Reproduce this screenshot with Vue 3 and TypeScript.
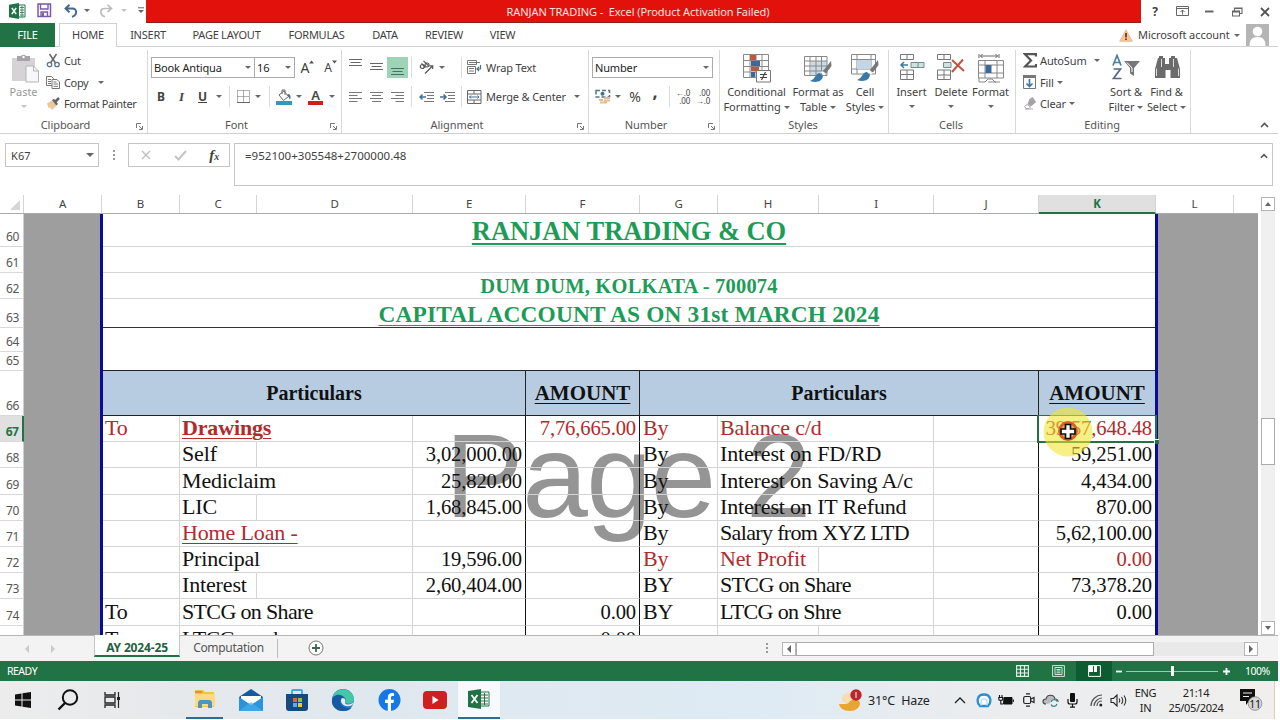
<script setup lang="ts">
interface Cell {
  text?: string
  cls?: string
  span?: number
}

interface Row {
  n: number
  h: number
  kind?: string
  cells: Cell[]
}

const menu = ['INSERT', 'PAGE LAYOUT', 'FORMULAS', 'DATA', 'REVIEW', 'VIEW']
const columns = ['A', 'B', 'C', 'D', 'E', 'F', 'G', 'H', 'I', 'J', 'K', 'L', '']

// to, account, inner amount, amount, by, account, amount
function entry(n: number, h: number, v: string[], cls: string[] = []): Row {
  const [to, left, inner, amount, by, right, total] = v
  const wideLeft = !['Self', 'LIC', 'Interest'].includes(left)
  const wideRight = !['Net Profit', ''].includes(right)
  // names in capitals are set closer
  const tight = (s: string) => (/TCG|LTD/.test(s) ? 'tight' : '')
  return {
    n,
    h,
    cells: [
      { text: to, cls: cls[0] },
      { text: left, cls: `${cls[1] ?? ''} ${wideLeft ? 'wide' : ''} ${tight(left)}` },
      {},
      { text: inner, cls: 'num ink' },
      { text: amount, cls: `num ink ${cls[3] ?? ''}` },
      { text: by, cls: `by ${cls[4] ?? ''}` },
      { text: right, cls: `${cls[5] ?? ''} ${wideRight ? 'wide' : ''} ${tight(right)}` },
      {},
      { cls: 'ink' },
      { text: total, cls: `num last ${cls[6] ?? ''}` },
    ],
  }
}

const rows: Row[] = [
  { n: 60, h: 33, kind: 'merged', cells: [{ text: 'RANJAN TRADING & CO', cls: 't-name', span: 10 }] },
  { n: 61, h: 26, kind: 'merged', cells: [{ span: 10 }] },
  { n: 62, h: 26, kind: 'merged', cells: [{ text: 'DUM DUM, KOLKATA - 700074', cls: 't-addr', span: 10 }] },
  { n: 63, h: 29, kind: 'merged', cells: [{ text: 'CAPITAL ACCOUNT AS ON 31st MARCH 2024', cls: 't-acc', span: 10 }] },
  { n: 64, h: 24, kind: 'merged', cells: [{ cls: 'open', span: 10 }] },
  { n: 65, h: 19, kind: 'merged', cells: [{ cls: 'rule', span: 10 }] },
  {
    n: 66,
    h: 45,
    kind: 'head',
    cells: [
      { text: 'Particulars', span: 4 },
      { text: 'AMOUNT', cls: 'amt' },
      { text: 'Particulars', span: 4 },
      { text: 'AMOUNT', cls: 'amt last' },
    ],
  },
  entry(67, 26, ['To', 'Drawings', '', '7,76,665.00', 'By', 'Balance c/d', '39,57,648.48'], ['red', 'red bold line', '', 'red', 'red', 'red', 'red']),
  entry(68, 26, ['', 'Self', '3,02,000.00', '', 'By', 'Interest on FD/RD', '59,251.00']),
  entry(69, 27, ['', 'Mediclaim', '25,820.00', '', 'By', 'Interest on Saving A/c', '4,434.00']),
  entry(70, 26, ['', 'LIC', '1,68,845.00', '', 'By', 'Interest on IT Refund', '870.00']),
  entry(71, 26, ['', 'Home Loan -', '', '', 'By', 'Salary from XYZ LTD', '5,62,100.00'], ['', 'red line']),
  entry(72, 26, ['', 'Principal', '19,596.00', '', 'By', 'Net Profit', '0.00'], ['', '', '', '', 'red', 'red', 'red']),
  entry(73, 26, ['', 'Interest', '2,60,404.00', '', 'BY', 'STCG on Share', '73,378.20']),
  entry(74, 27, ['To', 'STCG on Share', '', '0.00', 'BY', 'LTCG on Shre', '0.00']),
  entry(75, 27, ['To', 'LTCG on share', '', '0.00', '', '', '']),
]
</script>

<template>
  <div class="screen">
    <header class="title-bar">
      <div class="quick">
        <svg width="17" height="16" viewBox="0 0 17 16">
          <path d="M9 2h7v12H9z" fill="#fff" stroke="#217346" />
          <path d="M11 4.5h4M11 7h4M11 9.500h4M11 12h4M13 3v11" stroke="#217346" stroke-width=".8" />
          <path d="M0 1.800 10 0v16L0 14.200z" fill="#217346" />
          <path d="m2.800 4.800 4.400 6.400M7.200 4.800l-4.400 6.400" stroke="#fff" stroke-width="1.500" />
        </svg>
        <svg width="15" height="15" viewBox="0 0 15 15">
          <path d="M1 1h12.500v12.500H1z" fill="#fff" stroke="#7a5ba5" stroke-width="1.500" />
          <path d="M3.500 1v5h7.500V1M4 13V9h6.500v4" fill="none" stroke="#7a5ba5" stroke-width="1.400" />
          <path d="M5 10h2v3H5z" fill="#7a5ba5" />
        </svg>
        <svg width="15" height="14" viewBox="0 0 15 14">
          <path d="M5.500.8 1.500 4.500l4 3.700M2 4.500h6.500c5 0 5 6.500-.5 8.300" fill="none" stroke="#44658d" stroke-width="1.900" />
        </svg>
        <i class="dd" />
        <svg width="15" height="14" viewBox="0 0 15 14">
          <path d="m9.500.8 4 3.700-4 3.700M13 4.500H6.500c-5 0-5 6.500.5 8.300" fill="none" stroke="#bcbcbc" stroke-width="1.700" />
        </svg>
        <i class="dd pale" />
        <svg width="7" height="7" viewBox="0 0 7 7"><path d="M0 .8h6" stroke="#666" /><path d="M0 3h6L3 6z" fill="#666" /></svg>
      </div>
      <div class="caption">RANJAN TRADING -&nbsp; Excel (Product Activation Failed)</div>
      <div class="win-buttons">
        <b>?</b>
        <svg width="13" height="11" viewBox="0 0 13 11">
          <path d="M.5.500h12v9H.5zM.5 2.500h12M6.500 8.500V4M4.500 6l2-2 2 2" fill="none" stroke="#666" />
        </svg>
        <svg width="9" height="3" viewBox="0 0 9 3"><path d="M0 1.500h8.500" stroke="#666" stroke-width="2" /></svg>
        <svg width="11" height="10" viewBox="0 0 11 10">
          <path d="M.5 4h7v5h-7zM.5 5h7M2.500 3.500V1h7.500v5.500H8M2.500 1.500H10" fill="none" stroke="#666" stroke-width="1.100" />
        </svg>
        <svg width="10" height="10" viewBox="0 0 10 10"><path d="m1 1 8 8M9 1 1 9" stroke="#555" stroke-width="1.800" /></svg>
      </div>
    </header>

    <nav class="menu">
      <span class="file">FILE</span>
      <span class="home">HOME</span>
      <span v-for="m in menu" :key="m">{{ m }}</span>
      <div class="account">
        <svg width="14" height="13" viewBox="0 0 14 13">
          <path d="M7 .8 13.300 12.300H.7z" fill="#f6c698" stroke="#e9b07c" stroke-width=".8" />
          <path d="M7 4v4.500M7 9.500v1.600" stroke="#6b3a2a" stroke-width="1.800" />
        </svg>
        <span class="who">Microsoft account</span>
        <i class="dd" />
        <svg width="23" height="22" viewBox="0 0 23 22">
          <path d="M0 0h23v22H0z" fill="#b5b5b5" />
          <circle cx="11.500" cy="7.500" r="4.800" fill="#fff" />
          <path d="M3.500 22c0-6 2.500-9 8-9s8 3 8 9z" fill="#fff" />
        </svg>
      </div>
    </nav>

    <section class="ribbon">
      <div class="group g-clip">
        <div class="tools">
          <div class="big off">
            <svg width="28" height="29" viewBox="0 0 28 29">
              <path d="M0 4h23v23H0z" fill="#d5d3d6" />
              <path d="M5 2h4a3 3 0 0 1 5 0h4v5H5z" fill="#a4a4a4" /><circle cx="11.500" cy="3" r="1.200" fill="#fff" />
              <path d="M14 12h7.500l5 5v11H14z" fill="#f7f6f8" stroke="#b5b5b5" />
              <path d="M21.500 12v5h5" fill="none" stroke="#b5b5b5" />
            </svg>
            <span>Paste</span><i class="dd pale" />
          </div>
          <div class="stack">
            <div class="small">
              <svg width="15" height="15" viewBox="0 0 15 15">
                <path d="m3.500 1 6 9M10.500 1l-6 9" stroke="#666" stroke-width="1.500" />
                <circle cx="3.500" cy="11.500" r="2.200" fill="none" stroke="#56758f" stroke-width="1.300" />
                <circle cx="11" cy="11.500" r="2.200" fill="none" stroke="#56758f" stroke-width="1.300" />
              </svg>
              <span>Cut</span>
            </div>
            <div class="small">
              <svg width="15" height="13" viewBox="0 0 15 13">
                <path d="M.5.500h5l2 2v7h-7zM2 3.500h3M2 5.500h3M2 7.500h3" fill="#fff" stroke="#777" />
                <path d="M6 3.500h5l2.500 2.500v6.500H6zM7.500 6h3M7.500 8h4.500M7.500 10.300H12" fill="#fff" stroke="#777" />
              </svg>
              <span>Copy</span><i class="dd far" />
            </div>
            <div class="small">
              <svg width="15" height="13" viewBox="0 0 15 13">
                <path d="M1 6.500 6.500 3l4 5.500L6 13 4.500 10.500 2.500 11z" fill="#edc795" />
                <path d="m6 3 2-1.200 4 5.200L10.300 8.600z" fill="#5f6467" /><path d="M9.500 4.500 13 1" stroke="#5f6467" stroke-width="2.500" />
              </svg>
              <span>Format Painter</span>
            </div>
          </div>
        </div>
        <footer>Clipboard<svg class="launch" viewBox="0 0 7 7"><path d="M.5 5V.500H5M3 3l3 3M6.500 3v3.500H3" /></svg></footer>
      </div>

      <div class="group g-font">
        <div class="line1">
          <div class="combo">Book Antiqua<i class="dd" /></div>
          <div class="combo size">16<i class="dd" /></div>
          <span class="grow">A<svg width="5" height="4" viewBox="0 0 5 4"><path d="M0 3.500 2.500.500 5 3.500z" fill="#555" /></svg></span>
          <span class="grow less">A<svg width="5" height="4" viewBox="0 0 5 4"><path d="M0 .500h5l-2.500 3z" fill="#555" /></svg></span>
        </div>
        <div class="line2">
          <b>B</b><b class="ital">I</b><b class="under">U</b><i class="dd" /><i class="sep" />
          <svg width="13" height="13" viewBox="0 0 13 13">
            <path d="M.5.500h12v12M.5.500v12M6.500.500v12M.5 6.500h12" fill="none" stroke="#666" stroke-dasharray="1 1" />
            <path d="M0 12.500h13" stroke="#666" />
          </svg>
          <i class="dd" /><i class="sep" />
          <svg width="16" height="16" viewBox="0 0 16 16">
            <path d="m3 6 5-4 4.500 5.500-5 4z" fill="#fff" stroke="#666" /><path d="M6 5V1h3v5" fill="none" stroke="#666" />
            <path d="M12 5c3 .5 3 4 2 5.500-1.500-1-.5-3-3-4z" fill="#44718f" /><path d="M0 12h16v4H0z" fill="#2e9bb5" />
          </svg>
          <i class="dd" />
          <span class="fcolor">A</span>
          <i class="dd" />
        </div>
        <footer>Font<svg class="launch" viewBox="0 0 7 7"><path d="M.5 5V.500H5M3 3l3 3M6.500 3v3.500H3" /></svg></footer>
      </div>

      <div class="group g-align">
        <div class="line1">
          <svg width="13" height="21" viewBox="0 0 13 21"><path d="M0 2.500h13M1.500 5.500h10M0 8.500h13" stroke="#666" /></svg>
          <svg width="13" height="21" viewBox="0 0 13 21"><path d="M0 6.500h13M1.500 9.500h10M0 12.500h13" stroke="#666" /></svg>
          <svg class="active" width="21" height="21" viewBox="0 0 21 21"><path d="M4 11.500h13M5.500 14.500h10M4 17.500h13" stroke="#4d6f60" /></svg>
          <i class="sep" />
          <svg width="15" height="15" viewBox="0 0 15 15">
            <g fill="none" stroke="#555" stroke-width="1.200">
              <circle cx="3.300" cy="6.500" r="2" /><path d="m2.500 3.500 4 4" /><circle cx="8" cy="5" r="2" /><path d="m4.500.800 4.800 4.800" />
              <path d="m6 13.500 7.500-7.500M10.500 5.800h3.200V9" />
            </g>
          </svg>
          <i class="dd" /><i class="sep end" />
          <svg width="15" height="15" viewBox="0 0 15 15">
            <path d="M.5.500h9v4h-9zM.5 6.500h8v7h-8z" fill="none" stroke="#777" />
            <path d="M2 2.500h11M2 8.500h5M2 11h5" stroke="#777" /><path d="M13.500 5v4H10M12 7l-2 2 2 2" fill="none" stroke="#44718f" stroke-width="1.200" />
          </svg>
          <span class="start">Wrap Text</span>
        </div>
        <div class="line2">
          <svg width="13" height="12" viewBox="0 0 13 12"><path d="M0 1.500h13M0 4.500h8.500M0 7.500h13M0 10.500h8.500" stroke="#777" /></svg>
          <svg width="13" height="12" viewBox="0 0 13 12"><path d="M0 1.500h13M2 4.500h9M0 7.500h13M2 10.500h9" stroke="#777" /></svg>
          <svg width="13" height="12" viewBox="0 0 13 12"><path d="M0 1.500h13M4.500 4.500H13M0 7.500h13M4.500 10.500H13" stroke="#777" /></svg>
          <i class="sep" />
          <svg width="15" height="12" viewBox="0 0 15 12"><path d="M5 1.500h10M8 4.500h7M8 7.500h7M5 10.500h10" stroke="#777" /><path d="M7 6H1M3.500 3.500 1 6l2.500 2.500" fill="none" stroke="#44718f" stroke-width="1.500" /></svg>
          <svg width="15" height="12" viewBox="0 0 15 12"><path d="M5 1.500h10M8 4.500h7M8 7.500h7M5 10.500h10" stroke="#777" /><path d="M0 6h6M3.500 3.500 6 6 3.500 8.500" fill="none" stroke="#44718f" stroke-width="1.500" /></svg>
          <i class="sep end" />
          <svg width="15" height="14" viewBox="0 0 15 14">
            <path d="M.5.500h13.500v13H.5zM.5 4h13.500M.5 10h13.500M7 .500V4M7 10v3.500" fill="none" stroke="#666" />
            <path d="M2.500 7h9.500M4 5.500 2.500 7 4 8.500M10.500 5.500 12 7l-1.500 1.500" fill="none" stroke="#44718f" />
          </svg>
          <span class="start">Merge &amp; Center</span><i class="dd" />
        </div>
        <footer>Alignment<svg class="launch" viewBox="0 0 7 7"><path d="M.5 5V.500H5M3 3l3 3M6.500 3v3.500H3" /></svg></footer>
      </div>

      <div class="group g-num">
        <div class="line1"><div class="combo">Number<i class="dd" /></div></div>
        <div class="line2">
          <svg width="16" height="16" viewBox="0 0 16 16">
            <path d="M1 1.500h13.500v6.500H1z" fill="#fff" stroke="#56758f" stroke-width="1.500" stroke-dasharray="4 2" />
            <circle cx="7.500" cy="4.800" r="2" fill="#44718f" /><path d="M9 9h6M9 11.500h6M4 11h4M5 13.500h7" stroke="#e3be93" stroke-width="1.800" />
          </svg>
          <i class="dd" /><span class="pct">%</span><span class="comma">,</span><i class="sep" />
          <span class="dec">←.0<br>.00</span><span class="dec">.00<br>→.0</span>
        </div>
        <footer>Number<svg class="launch" viewBox="0 0 7 7"><path d="M.5 5V.500H5M3 3l3 3M6.500 3v3.500H3" /></svg></footer>
      </div>

      <div class="group g-styles">
        <div class="tools">
          <div class="big">
            <svg width="28" height="29" viewBox="0 0 28 29">
              <path d="M.5.500h25v23H.5zM7 .500v23M13 .500v23M19 .500v23M.5 6.500h25M.5 12.500h25M.5 18h25" fill="#fff" stroke="#888" />
              <path d="M7 1h6v5H7zM8 13h8v4H8z" fill="#c2553f" /><path d="M8 7h9v5H8zM8 18h4v5H8z" fill="#3b6a98" />
              <path d="M13.500 16.500h14v11.500h-14z" fill="#fff" stroke="#777" /><path d="M17 20.500h7M17 23.500h7M22.500 18l-4 8" stroke="#444" stroke-width="1.200" />
            </svg>
            <span>Conditional</span><span>Formatting<i class="dd" /></span>
          </div>
          <div class="big">
            <svg width="28" height="29" viewBox="0 0 28 29">
              <path d="M7 7h16v14H7z" fill="#c8dbe6" />
              <path d="M.5 2.500h22.500v19H.5zM6 2.500v19M12 2.500v19M17.500 2.500v19M.5 7h22.500M.5 12h22.500M.5 17h22.500" fill="none" stroke="#888" />
              <path d="m27 7-8 10 3 2.500L27.500 12z" fill="#777" /><path d="m18 17 3.500 3-1.500 1.500-3.200-3z" fill="#fff" /><path d="M16 19c-5 0-4 6-10 8 6 2 12 1 13-5z" fill="#3b79a5" />
            </svg>
            <span>Format as</span><span>Table<i class="dd" /></span>
          </div>
          <div class="big">
            <svg width="28" height="29" viewBox="0 0 28 29">
              <path d="M.5.500h24v19.500H.5zM6 .500v19.500M20 .500v19.500M.5 5.500h24M.5 15h24" fill="#fff" stroke="#888" /><path d="M6 6h14v9H6z" fill="#c1d7e8" />
              <path d="m27 6-8 10 3 2.500L27.500 11z" fill="#777" /><path d="m18 16 3.500 3-1.500 1.500-3.200-3z" fill="#fff" /><path d="M16 18c-5 0-4 6-10 8 6 2 12 1 13-5z" fill="#3b79a5" />
            </svg>
            <span>Cell</span><span>Styles<i class="dd" /></span>
          </div>
        </div>
        <footer>Styles</footer>
      </div>

      <div class="group g-cells">
        <div class="tools">
          <div class="big">
            <svg width="28" height="29" viewBox="0 0 28 29">
              <path d="M2.500.500h13v5h-13zM9 .500v5M2.500 16h13v9.500h-13zM9 16v9.500M2.500 20.500h13" fill="#fff" stroke="#777" />
              <path d="M13 8.500h13v5H13zM20 8.500v5" fill="#cfe3dc" stroke="#6f8f8a" /><path d="M10 11H3M6 8l-3 3 3 3" fill="none" stroke="#3b79a5" stroke-width="1.500" />
            </svg>
            <span>Insert</span><i class="dd" />
          </div>
          <div class="big">
            <svg width="28" height="29" viewBox="0 0 28 29">
              <path d="M.5.500h13v5h-13zM7 .500v5M.5 16h13v9.500h-13zM7 16v9.500M.5 21h13" fill="#fff" stroke="#777" />
              <path d="M6.500 8.500H14v5H6.500z" fill="#cfe3dc" stroke="#6f8f8a" /><path d="m15 6 12 11M26 5.500 15 18" stroke="#bf5540" stroke-width="2" />
            </svg>
            <span>Delete</span><i class="dd" />
          </div>
          <div class="big">
            <svg width="28" height="29" viewBox="0 0 28 29">
              <path d="M2 0v4M22 0v4M3 2h18M5.500 0l-2 2 2 2M18.500 0l2 2-2 2" fill="none" stroke="#666" />
              <path d="M1.500 6.500h25V24h-25zM8 6.500V24M20 6.500V24M1.500 11h25M1.500 19h25" fill="#fff" stroke="#888" />
              <path d="M8.500 11h6v8h-6z" fill="#3b6a98" /><path d="M2 24v4h6l3-3h4l3 3h5M11 28h8" fill="none" stroke="#888" />
            </svg>
            <span>Format</span><i class="dd" />
          </div>
        </div>
        <footer>Cells</footer>
      </div>

      <div class="group g-edit">
        <div class="tools">
          <div class="stack">
            <div class="small">
              <svg width="14" height="15" viewBox="0 0 14 15"><path d="M13 3.500V1.200H2l6 6.300-6 6h11V11" fill="none" stroke="#555" stroke-width="2.200" /></svg>
              <span class="wide-lbl">AutoSum</span><i class="dd" />
            </div>
            <div class="small">
              <svg width="14" height="14" viewBox="0 0 14 14"><path d="M.5.500h12v13H.5z" fill="#fff" stroke="#777" /><path d="M0 0h13v3H0z" fill="#777" /><path d="M6.500 4v7.500M3.500 8.500l3 3 3-3" fill="none" stroke="#3b79a5" stroke-width="1.700" /></svg>
              <span>Fill</span><i class="dd" />
            </div>
            <div class="small">
              <svg width="14" height="13" viewBox="0 0 14 13"><path d="m6.500 2 3-2L13 5 8 9.500 4.500 7z" fill="#a8a0a8" /><path d="M4 7.500 7.500 10 6 11.500H3L1.500 9.500z" fill="#fff" stroke="#aaa" /><path d="M2 12h8" stroke="#aaa" /></svg>
              <span>Clear</span><i class="dd" />
            </div>
          </div>
          <div class="big">
            <svg width="28" height="29" viewBox="0 0 28 29">
              <path d="m1 11.500 4-10 4 10M2.300 8.500h5.400" fill="none" stroke="#4a7f9d" stroke-width="1.700" />
              <path d="M1.500 15h7L1.500 24.500h8" fill="none" stroke="#5b6687" stroke-width="1.700" />
              <path d="M12 7h16l-6 7v8l-4-2.500V14z" fill="#777" /><path d="m15 8.500 5 5.500v4" fill="none" stroke="#fff" />
            </svg>
            <span>Sort &amp;</span><span>Filter<i class="dd" /></span>
          </div>
          <div class="big">
            <svg width="28" height="29" viewBox="0 0 28 29">
              <path d="M6 4V2h4v2h2v6h4V4h2V2h4v2h2l3 11v9h-9.500v-8h-5v8H2v-9L5 4z" fill="#6b6b6b" />
              <path d="M3.500 14.500V22M25.500 14.500V22M8.500 5v8M20.500 5v8" stroke="#ddd" />
            </svg>
            <span>Find &amp;</span><span>Select<i class="dd" /></span>
          </div>
        </div>
        <footer>Editing</footer>
      </div>
      <div class="fold"><svg width="9" height="6" viewBox="0 0 9 6"><path d="m1 5 3.500-3.500L8 5" fill="none" stroke="#555" stroke-width="1.600" /></svg></div>
    </section>

    <section class="formula-bar">
      <div class="name-box">K67<i class="dd big-dd" /></div>
      <span class="dots"><i /><i /><i /></span>
      <div class="fx">
        <svg width="10" height="10" viewBox="0 0 10 10"><path d="m1 1 8 8M9 1 1 9" stroke="#c2c2c2" stroke-width="1.500" /></svg>
        <svg width="13" height="11" viewBox="0 0 13 11"><path d="m1 6 3.500 3.500L12 1" fill="none" stroke="#c4c4c4" stroke-width="2" /></svg>
        <em>f<small>x</small></em>
      </div>
      <div class="formula">
        =952100+305548+2700000.48
        <svg width="8" height="6" viewBox="0 0 9 6"><path d="m1 5 3.500-3.500L8 5" fill="none" stroke="#555" stroke-width="1.800" /></svg>
      </div>
    </section>

    <main class="work">
      <div class="sheet">
        <div class="col-heads">
          <span class="corner"><i /></span>
          <span v-for="c in columns" :key="c" :class="{ sel: c === 'K', none: c === '' }">{{ c }}</span>
        </div>
        <div class="grid-area">
          <div class="row-heads">
            <span v-for="r in rows" :key="r.n" :class="{ sel: r.n === 67 }" :style="{ height: r.h + 'px' }">{{ r.n === 75 ? '' : r.n }}</span>
          </div>
          <div class="outside left" />
          <div class="page">
            <div class="watermark">Page 2</div>
            <div v-for="r in rows" :key="r.n" class="row" :class="r.kind" :style="{ height: r.h + 'px' }">
              <div v-for="(c, i) in r.cells" :key="i" class="cell" :class="c.cls" :style="{ gridColumn: `span ${c.span ?? 1}` }">
                <span>{{ c.text }}</span>
              </div>
            </div>
            <div class="selection"><i /></div>
            <svg class="pointer" width="50" height="50" viewBox="0 0 50 50">
              <circle cx="25" cy="25" r="24.500" fill="#f0e52c" fill-opacity=".58" />
              <circle cx="25" cy="24" r="8.500" fill="#e9a03c" stroke="#d5602f" stroke-width="3" fill-opacity=".7" />
              <path d="M22.500 17.500h5v4.500h4.500v5h-4.500v4.500h-5V27H18v-5h4.500z" fill="#fff" stroke="#111" stroke-width="1.700" />
            </svg>
          </div>
          <div class="outside right" />
        </div>
      </div>
      <div class="v-scroll">
        <span class="sbtn"><i class="up" /></span>
        <div class="v-track"><div class="v-thumb" /></div>
        <span class="sbtn"><i class="down" /></span>
      </div>
    </main>

    <section class="tabs-bar">
      <div class="tab-nav"><i class="lt" /><i class="rt" /></div>
      <span class="tab on">AY 2024-25</span>
      <span class="tab">Computation</span>
      <svg class="add" width="16" height="16" viewBox="0 0 16 16"><circle cx="8" cy="8" r="7" fill="#fff" stroke="#777" /><path d="M8 4v8M4 8h8" stroke="#3f6653" stroke-width="1.800" /></svg>
      <span class="dots"><i /><i /><i /></span>
      <div class="h-scroll">
        <span class="sbtn"><i class="lt" /></span>
        <div class="h-track"><div class="h-thumb" /></div>
        <span class="sbtn"><i class="rt" /></span>
      </div>
    </section>

    <section class="status">
      <span class="ready">READY</span>
      <span class="view"><svg width="13" height="12" viewBox="0 0 13 12"><path d="M.6.600h11.800v10.800H.6zM4.500 0v12M8.500 0v12M0 4.200h13M0 8h13" fill="none" stroke="#e8f2ec" stroke-width="1.100" /></svg></span>
      <span class="view"><svg width="13" height="12" viewBox="0 0 13 12"><path d="M.6.600h11.800v10.800H.6zM3 2.500h7v7H3zM4.500 4.500h4M4.500 6h4M4.500 7.800h4" fill="none" stroke="#d5e7dc" /></svg></span>
      <span class="view on"><svg width="13" height="12" viewBox="0 0 13 12"><path d="M.6.600h11.800v10.800H.6z" fill="none" stroke="#fff" /><path d="M1 1h4v6H1zM6 1h3v6H6z" fill="#fff" /></svg></span>
      <svg class="zoom" width="120" height="14" viewBox="0 0 120 14">
        <path d="M4 7.500h6" stroke="#fff" stroke-width="1.800" /><path d="M14 7.500h92" stroke="#a5c7b3" />
        <path d="M59 2h3v10h-3z" fill="#fff" /><path d="M111 7.500h7M114.500 4v7" stroke="#fff" stroke-width="1.800" />
      </svg>
      <span class="pcent">100%</span>
    </section>

    <footer class="taskbar">
      <div class="apps">
        <span><svg width="16" height="16" viewBox="0 0 16 16"><path d="m0 2.500 6.500-1v6H0zM7.500 1.300 16 0v7.500H7.500zM0 8.500h6.500v6l-6.500-1zM7.500 8.500H16V16l-8.500-1.300z" fill="#111" /></svg></span>
        <span><svg width="22" height="22" viewBox="0 0 22 22"><circle cx="13" cy="8.500" r="7.200" fill="none" stroke="#111" stroke-width="2" /><path d="m8 14-6.500 6.500" stroke="#111" stroke-width="2.400" /></svg></span>
        <span><svg width="17" height="16" viewBox="0 0 17 16"><path d="M1 0v3h10V0M1 5h10v6H1zM1 16v-3h10v3" fill="none" stroke="#222" stroke-width="1.300" /><path d="M14.500 0v16" stroke="#222" stroke-width="1.200" /><path d="M13 5h3v3h-3z" fill="#222" /></svg></span>
        <span class="gap" />
        <span class="run"><svg width="22" height="18" viewBox="0 0 22 18"><path d="M1 0h8l2 2h9v15H1z" fill="#f1c04e" /><path d="M1 4h20v12H1z" fill="#fcda81" /><path d="M1 1h7v2H1z" fill="#e08d3c" /><path d="M4 18v-5q0-3 3-3h8q3 0 3 3v5h-4v-4H8v4z" fill="#4c96c4" /></svg></span>
        <span><svg width="24" height="22" viewBox="0 0 24 22"><path d="M0 8 12 0l12 8v4H0z" fill="#135a9e" /><path d="M2 7h20v7H2z" fill="#fff" /><path d="M0 8v14h24V8l-12 8z" fill="#2b93dd" /><path d="m0 22 12-9 12 9z" fill="#45b5f0" opacity=".6" /></svg></span>
        <span><svg width="22" height="22" viewBox="0 0 22 22"><path d="M6 6V2q0-1 1-1h8q1 0 1 1v4" fill="none" stroke="#47a3df" stroke-width="1.800" /><path d="M0 5h22v14q0 3-3 3H3q-3 0-3-3z" fill="#164a7c" /><path d="M7 9h4v4H7z" fill="#e3623b" /><path d="M12 9h4v4h-4z" fill="#8cc152" /><path d="M7 14h4v4H7z" fill="#4bb4ef" /><path d="M12 14h4v4h-4z" fill="#f3c43f" /></svg></span>
        <span>
          <svg width="24" height="22" viewBox="0 0 24 22">
            <circle cx="12" cy="11" r="11" fill="#1b78c8" /><path d="M1.500 8C4-2 20-3 23 9c.7 5-4 7-9 5 2-2 1-6-3-7-4-.8-7 0-9.500 1z" fill="#45c6a5" />
            <path d="M1 11c1-6 10-7 12-2-6 0-5 8 2 10 3 .7 5 0 6-1-2 3-5 4-9 4C5 22 0 17 1 11z" fill="#185aa0" /><path d="M11 9c5 0 3 4 3 5 2 3 7 1 9-1-1 4-5 5-8 4-5-1-6-6-4-8z" fill="#e3eef2" />
          </svg>
        </span>
        <span><svg width="23" height="22" viewBox="0 0 23 22"><circle cx="11.500" cy="11" r="11" fill="#1578e6" /><path d="M9.800 22v-8H7v-3.200h2.800V8.500c0-3 1.700-4.500 4.300-4.500l2 .2v2.900h-1.500c-1.300 0-1.600.7-1.600 1.700v2h3l-.6 3.200H13v8z" fill="#fff" /></svg></span>
        <span><svg width="24" height="18" viewBox="0 0 24 18"><rect width="24" height="18" rx="4" fill="#cd201f" /><path d="m9.500 5 6 4-6 4z" fill="#fff" /></svg></span>
        <span class="run now">
          <svg width="22" height="20" viewBox="0 0 22 20">
            <path d="M11 3h10v14H11z" fill="#fff" stroke="#217346" /><path d="M13 6h7M13 9h7M13 12h7M13 15h7M16.500 4v12" stroke="#217346" />
            <path d="M0 2 13 0v20L0 18z" fill="#217346" /><path d="m3.500 6 6 8M9.500 6l-6 8" stroke="#fff" stroke-width="1.800" />
          </svg>
        </span>
      </div>
      <div class="tray">
        <svg width="23" height="23" viewBox="0 0 23 23">
          <path d="M3 12C2 5 9 1 13 5c3 3 1 10-4 11z" fill="#f8dcb4" /><path d="M0 15h7c3 0 3-3 6-4 4-1 8 0 8 3 0 5-5 8-10 8C4 22 1 19 0 15z" fill="#eaa52f" />
          <circle cx="17" cy="6" r="5.700" fill="#b9272b" /><path d="M17 3v6" stroke="#fff" />
        </svg>
        <span class="weather">31°C&nbsp; Haze</span>
        <svg width="12" height="8" viewBox="0 0 12 8"><path d="m1 7 5-5 5 5" fill="none" stroke="#222" stroke-width="1.300" /></svg>
        <svg width="16" height="15" viewBox="0 0 16 15"><path d="M4 13C0 9 1 1.500 8 1.500s8 7.500 4 11.500z" fill="#fff" stroke="#2b8ed0" stroke-width="2.300" /><path d="M5 13V8q0-2 3-2t3 2v5" fill="none" stroke="#9fd0ec" /></svg>
        <svg width="16" height="11" viewBox="0 0 16 11"><path d="M6 2.500h8V9H5.500z" fill="#111" stroke="#111" /><path d="M15.300 4.500v2.500M1.500 0v2M4 0v2M.8 2.500v1.700q0 1 1 1h1.900q1 0 1-1V2.500zM2.800 5v4H5" fill="none" stroke="#111" stroke-width="1.100" /></svg>
        <svg width="12" height="14" viewBox="0 0 12 14"><rect x=".7" y="3.500" width="7" height="7" rx="1.500" fill="none" stroke="#222" stroke-width="1.200" /><path d="m8 6 3-1.500v5L8 8M3 .8h4M3 13.200h4" fill="none" stroke="#222" stroke-width="1.200" /></svg>
        <svg width="17" height="13" viewBox="0 0 17 13"><path d="M4 10C0 10 0 5 4 5c1-5 8-5 9 0 2 0 3 1.500 3 3" fill="#b9bcbd" stroke="#444" stroke-width="1.200" /><circle cx="12" cy="9" r="3.800" fill="#eee" /><path d="M9 8c1-3 5-3 6-.5M15 10c-1 3-5 3-6 .5" fill="none" stroke="#37828c" stroke-width="1.200" /></svg>
        <svg width="11" height="15" viewBox="0 0 11 15"><rect x="3" width="5" height="9" rx="1" fill="#111" /><path d="M1 6v3q0 2 2 2h5q2 0 2-2V6M5.500 11v3M3 14.200h5" fill="none" stroke="#111" stroke-width="1.200" /></svg>
        <svg width="13" height="13" viewBox="0 0 13 13"><path d="M1 12C1 6 6 1 12 1M4 12c0-4 4-8 8-8M7 12c0-3 2-5 5-5" fill="none" stroke="#555" stroke-width="1.200" /><circle cx="10.800" cy="11" r="1.500" fill="#222" /></svg>
        <svg width="17" height="13" viewBox="0 0 17 13"><path d="M1 4.500h2.500L7 1v11L3.500 8.500H1z" fill="none" stroke="#222" stroke-width="1.100" /><path d="M9 4.500q1.500 2 0 4M11.500 3q2.500 3.500 0 7M14 1.500q3.500 5 0 10" fill="none" stroke="#333" stroke-width="1.100" /></svg>
        <span class="two">ENG<br>IN</span>
        <span class="two">21:14<br>25/05/2024</span>
        <svg class="notes" width="23" height="22" viewBox="0 0 23 22">
          <path d="M0 0h15v12H9l-3 4v-4H0z" fill="#111" /><path d="M3 4h9M3 7.500h6" stroke="#eee" /><circle cx="15" cy="14.500" r="6.800" fill="#d6d6d6" stroke="#777" stroke-width=".7" />
          <text x="15" y="18.500" text-anchor="middle" font-size="10.500" fill="#111">11</text>
        </svg>
      </div>
    </footer>
  </div>
</template>

<style>
body {
  margin: 0;
  background: #fff;
}
</style>

<style scoped>
.screen {
  width: 1280px;
  height: 720px;
  overflow: hidden;
  display: flex;
  flex-direction: column;
  background: #fff;
  color: #3f3f3f;
  font-family: 'Noto Sans', sans-serif;
  font-size: 11px;
  letter-spacing: -0.15px;
  white-space: nowrap;
}

.screen * {
  box-sizing: border-box;
}

svg {
  display: block;
  flex: none;
}

.dd {
  display: inline-block;
  width: 0;
  height: 0;
  flex: none;
  border: 3px solid transparent;
  border-top-color: #666;
  border-bottom: 0;
}

.dd.pale {
  border-top-color: #c4c4c4;
}

.sep {
  width: 1px;
  height: 21px;
  background: #dcdcdc;
}

/* Title bar */
.title-bar {
  display: flex;
  height: 23px;
}

.quick {
  width: 146px;
  display: grid;
  grid-template-columns: 34px 20px 34px 1px 32px 9px 22px;
  align-items: center;
  justify-items: center;
  padding-bottom: 2px;
}

.quick .dd {
  margin-left: -3px;
}

.caption {
  width: 995px;
  padding-right: 11px;
  background: #e2110c;
  color: #ffe3e0;
  border-bottom: 1px solid #8b2420;
  text-align: center;
  line-height: 23px;
  letter-spacing: -0.08px;
}

.win-buttons {
  display: grid;
  grid-template-columns: 28px 27px 27px 28px 27px;
  align-items: center;
  justify-items: center;
  font-size: 12px;
}

/* Menu */
.menu {
  display: grid;
  grid-template-columns: 55px 66px 54px 103px 77px 60px 58px 59px 1fr;
  width: 1278px;
  height: 24px;
  border-bottom: 1px solid #d2d2d2;
  line-height: 24px;
  text-align: center;
  letter-spacing: -0.25px;
}

.file {
  background: #217346;
  color: #fff;
}

.home {
  width: 58px;
  margin-left: 4px;
  border: 1px solid #d2d2d2;
  border-bottom: 0;
  background: #fff;
  height: 24px;
  line-height: 22px;
}

.account {
  display: flex;
  align-items: center;
  justify-content: flex-end;
  padding-right: 9px;
}

.account .who {
  width: 91px;
  margin: 0 5px;
  letter-spacing: -0.05px;
}

.account svg:last-child {
  margin-left: 6px;
}

/* Ribbon */
.ribbon {
  display: flex;
  width: 1278px;
  height: 87px;
  border-bottom: 1px solid #d0d0d0;
}

.group {
  display: flex;
  flex-direction: column;
  height: 83px;
  margin-top: 3px;
  border-right: 1px solid #d9d9d9;
}

.g-clip { width: 148px; }
.g-font { width: 194px; }
.g-align { width: 247px; }
.g-num { width: 131px; }
.g-styles { width: 169px; }
.g-cells { width: 127px; }
.g-edit { width: 175px; }

.group footer {
  position: relative;
  margin-top: auto;
  height: 16px;
  padding-right: 16px;
  text-align: center;
  line-height: 16px;
  color: #555;
  letter-spacing: -0.05px;
}

.g-styles footer,
.g-cells footer,
.g-edit footer {
  padding-right: 2px;
}

.launch {
  position: absolute;
  right: 4px;
  top: 6px;
  width: 7px;
  height: 7px;
  fill: none;
  stroke: #777;
}

.tools {
  display: flex;
}

.big {
  display: flex;
  flex-direction: column;
  align-items: center;
  padding-top: 4px;
  line-height: 15px;
  letter-spacing: -0.05px;
}

.big svg {
  margin-bottom: 1px;
}

.big > .dd {
  margin-top: 6px;
}

.big span .dd {
  margin: 0 0 2px 3px;
}

.off {
  color: #999;
}

.g-clip .tools {
  padding-left: 3px;
}

.g-clip .big { width: 41px; }
.g-clip .big svg { margin-left: 5px; }

.stack {
  display: flex;
  flex-direction: column;
}

.small {
  display: flex;
  align-items: center;
  height: 21.5px;
}

.g-clip .small {
  gap: 3px;
  padding-left: 2px;
  letter-spacing: -0.35px;
}

.far {
  margin-left: 7px;
}

.line1,
.line2 {
  display: grid;
  align-items: center;
  justify-items: center;
}

.line1 {
  height: 21px;
  margin-top: 7px;
}

.line2 {
  height: 21px;
  margin-top: 8px;
}

.combo {
  display: flex;
  align-items: center;
  justify-content: space-between;
  width: 100%;
  height: 21px;
  padding: 0 3px 0 2px;
  border: 1px solid #ababab;
  color: #222;
}

.combo.size {
  border-left: 0;
}

.g-font .line1 {
  grid-template-columns: 104px 40px 25px 21px;
  padding-left: 3px;
}

.g-font .line2 {
  grid-template-columns: 20px 21px 21px 12px 9px 18px 12px 10px 19px 11px 23px 10px;
  padding-left: 3px;
  color: #444;
  font-size: 12px;
}

.ital {
  font-family: 'Liberation Serif', serif;
  font-size: 13px;
  font-style: italic;
}

.under {
  text-decoration: underline;
}

.grow {
  display: flex;
  font-size: 14px;
  line-height: 20px;
}

.grow.less {
  font-size: 12px;
}

.grow svg {
  margin-top: 2px;
}

.fcolor {
  width: 15px;
  height: 16px;
  border-bottom: 4px solid #c9211e;
  font-size: 13px;
  font-weight: 600;
  line-height: 12px;
  text-align: center;
}

.g-align .line1 {
  grid-template-columns: 21px 21px 21px 7px 22px 10px 15px 24px 1fr;
  padding-left: 3px;
}

.g-align .line2 {
  grid-template-columns: 21px 21px 21px 7px 22px 20px 5px 24px 80px 22px;
  padding-left: 3px;
}

.active {
  background: #9fd3b8;
}

.start {
  justify-self: start;
}

.end {
  justify-self: end;
}

.g-num .line1 {
  padding: 0 6px 0 3px;
}

.g-num .line2 {
  grid-template-columns: 18px 12px 22px 18px 10px 18px 22px;
  padding-left: 5px;
}

.pct {
  font-size: 14px;
}

.comma {
  font-size: 18px;
  font-weight: 700;
  line-height: 8px;
  padding-bottom: 11px;
}

.dec {
  font-size: 8px;
  line-height: 8px;
  text-align: right;
}

.g-styles .tools {
  display: grid;
  grid-template-columns: 67px 56px 38px;
  padding-left: 3px;
}

.g-cells .tools {
  display: grid;
  grid-template-columns: 39px 40px 39px;
  padding-left: 3px;
}

.g-edit .tools {
  display: grid;
  grid-template-columns: 84px 38px 43px;
  padding-left: 7px;
}

.g-edit .small {
  gap: 3px;
}

.wide-lbl {
  width: 51px;
}

.fold {
  display: flex;
  align-items: flex-end;
  padding: 0 0 5px 69px;
}

/* Formula bar */
.formula-bar {
  display: grid;
  grid-template-columns: 94px 29px 102px 4px 1039px;
  padding: 9px 0 0 5px;
  height: 61px;
}

.name-box,
.fx {
  display: flex;
  align-items: center;
  height: 24px;
  border: 1px solid #c6c6c6;
}

.name-box {
  justify-content: space-between;
  padding: 0 4px 0 5px;
  letter-spacing: 0.1px;
}

.big-dd {
  border-width: 4px 4px 0;
}

.dots {
  display: flex;
  flex-direction: column;
  align-items: center;
  gap: 2px;
  padding-top: 7px;
}

.dots i {
  width: 2px;
  height: 2px;
  background: #999;
}

.fx {
  justify-content: space-between;
  padding: 0 10px 0 12px;
}

.fx em {
  font-family: 'Liberation Serif', serif;
  font-size: 15px;
  font-weight: 700;
}

.fx small {
  font-size: 10px;
}

.formula {
  grid-column: 5;
  display: flex;
  justify-content: space-between;
  height: 43px;
  padding: 0 4px 0 10px;
  border: 1px solid #c6c6c6;
  line-height: 24px;
  font-size: 11.5px;
  letter-spacing: 0.02px;
}

.formula svg {
  margin-top: 9px;
}

/* Worksheet */
.work {
  display: flex;
  height: 440px;
}

.sheet {
  width: 1258px;
}

.col-heads {
  display: grid;
  grid-template-columns: 24px 78px 78px 77px 156px 113px 114px 78px 101px 115px 105px 117px 78px 24px;
  height: 19px;
  border-bottom: 1px solid #ababab;
  line-height: 18px;
  text-align: center;
  font-size: 11.5px;
  color: #444;
}

.col-heads span {
  height: 18px;
  border-right: 1px solid #d5d5d5;
}

.col-heads .none {
  border: 0;
}

.col-heads .sel {
  height: 19px;
  background: #e0e0e0;
  border-bottom: 2px solid #217346;
  color: #217346;
  font-weight: 700;
}

.corner i {
  display: block;
  width: 0;
  margin: 5px 0 0 10px;
  border-left: 10px solid transparent;
  border-bottom: 10px solid #d6d6d6;
}

.grid-area {
  display: flex;
  height: 421px;
  overflow: hidden;
}

.row-heads {
  width: 24px;
  flex: none;
}

.row-heads span {
  display: flex;
  align-items: flex-end;
  justify-content: flex-end;
  padding: 0 4px 1px 0;
  border-right: 1px solid #cfcfcf;
  border-bottom: 1px solid #d9d9d9;
  font-size: 12px;
  letter-spacing: -0.4px;
  line-height: 16px;
  color: #555;
}

.row-heads .sel {
  background: #e0e0e0;
  border-right: 2px solid #217346;
  color: #217346;
  font-weight: 700;
  letter-spacing: -0.8px;
}

.outside {
  background: #9e9e9e;
}

.outside.left {
  width: 76px;
}

.outside.right {
  width: 100px;
}

.page {
  position: relative;
  width: 1058px;
  flex: none;
  border: solid #0a0a9e;
  border-width: 0 3px;
  font-family: 'Book Antiqua', 'Palatino Linotype', 'Liberation Serif', serif;
  font-size: 22px;
  line-height: 22px;
  letter-spacing: -0.15px;
  color: #111;
}

.watermark {
  position: absolute;
  left: 342px;
  top: 197px;
  font: 118px/130px 'Liberation Sans', sans-serif;
  letter-spacing: -1.5px;
  color: #959595;
}

.row {
  position: relative;
  display: grid;
  grid-template-columns: 77px 77px 156px 113px 114px 78px 101px 115px 105px 116px;
}

.cell {
  display: flex;
  align-items: center;
  padding: 0 2px 1px;
  border-right: 1px solid #d4d4d4;
  border-bottom: 1px solid #d4d4d4;
  min-width: 0;
}

.cell.wide {
  border-right-color: transparent;
}

.cell.tight {
  letter-spacing: -0.65px;
}

.cell.by {
  padding-left: 3px;
}

.cell.num {
  justify-content: flex-end;
  padding-right: 3px;
  font-size: 20.6px;
}

.cell.ink {
  border-right-color: #111;
}

.cell.last {
  border-right: 0;
}

.red {
  color: #b22a2c;
}

.bold {
  font-weight: 700;
}

.line {
  text-decoration: underline;
  text-decoration-thickness: 1px;
  text-underline-offset: 3px;
}

.merged .cell {
  justify-content: center;
  border-right: 0;
  padding: 1px 0 0;
  color: #1d9c57;
  font-weight: 700;
}

.merged .t-name {
  font-size: 26.5px;
  letter-spacing: -0.05px;
  text-decoration: underline;
  text-decoration-thickness: 2px;
  text-underline-offset: 3px;
}

.merged .t-addr {
  font-size: 20.5px;
  letter-spacing: 0.2px;
}

.merged .t-acc {
  font-size: 23.4px;
  letter-spacing: 0.15px;
  border-bottom-color: #333;
  text-decoration: underline;
  text-decoration-thickness: 1px;
  text-underline-offset: 3px;
}

.merged .open {
  border-bottom: 0;
}

.merged .rule {
  border-bottom-color: #222;
}

.head .cell {
  justify-content: center;
  background: #b7cce1;
  border-color: #222;
  padding: 0;
  font-size: 20px;
  font-weight: 700;
  letter-spacing: 0;
}

.head .amt {
  font-size: 21px;
  text-decoration: underline;
  text-decoration-thickness: 1px;
  text-underline-offset: 3px;
}

.selection {
  position: absolute;
  left: 934px;
  top: 201px;
  width: 120px;
  height: 28px;
  border: 2px solid #217346;
  border-width: 1px 2px 2px;
}

.selection i {
  position: absolute;
  right: -4px;
  bottom: -3px;
  width: 5px;
  height: 5px;
  background: #217346;
  border: solid #fff;
  border-width: 1px 0 0 1px;
}

.pointer {
  position: absolute;
  left: 940px;
  top: 193px;
}

/* Scroll bars */
.v-scroll {
  display: flex;
  flex-direction: column;
  width: 17px;
  padding: 2px 0 0 3px;
}

.sbtn {
  display: flex;
  align-items: center;
  justify-content: center;
  flex: none;
  width: 14px;
  height: 14px;
  border: 1px solid #b4b4b4;
  background: #fff;
}

.v-track {
  flex: 1;
  background: #f0f0f0;
}

.v-thumb {
  height: 47px;
  margin-top: 207px;
  border: 1px solid #ababab;
  background: #fff;
}

.up,
.down {
  border: 3px solid transparent;
}

.up {
  border-top: 0;
  border-bottom: 4px solid #666;
}

.down {
  border-bottom: 0;
  border-top: 4px solid #666;
}

.lt,
.rt {
  border: 4px solid transparent;
}

.lt {
  border-left: 0;
  border-right-color: #666;
}

.rt {
  border-right: 0;
  border-left-color: #666;
}

/* Sheet tabs */
.tabs-bar {
  display: flex;
  flex: none;
  width: 1278px;
  height: 26px;
  border-top: 1px solid #b5b5b5;
  background: #f3f3f3;
}

.tab-nav {
  display: flex;
  align-items: center;
  gap: 22px;
  width: 94px;
  padding-left: 25px;
}

.tab-nav i {
  opacity: 0.3;
}

.tab {
  width: 98px;
  height: 19px;
  margin-top: 3px;
  border-right: 1px solid #bbb;
  line-height: 18px;
  text-align: center;
  font-size: 12px;
  letter-spacing: -0.3px;
  color: #555;
}

.tab.on {
  width: 86px;
  height: 22px;
  margin-top: -1px;
  border: 1px solid #c5c5c5;
  border-top: 0;
  border-bottom: 2px solid #217346;
  background: #fff;
  color: #235f41;
  font-weight: 700;
  line-height: 25px;
  letter-spacing: -0.15px;
}

.add {
  margin: 4px 0 0 30px;
}

.tabs-bar .dots {
  margin-left: 442px;
}

.h-scroll {
  display: flex;
  width: 476px;
  margin: 6px 0 0 14px;
}

.h-track {
  flex: 1;
  height: 14px;
  background: #e9e9e9;
}

.h-thumb {
  width: 358px;
  height: 14px;
  border: 1px solid #ababab;
  background: #fff;
}

/* Status bar */
.status {
  display: flex;
  flex: none;
  align-items: center;
  width: 1278px;
  height: 20px;
  background: #217346;
  color: #fff;
  font-size: 10.5px;
  letter-spacing: -0.5px;
}

.ready {
  width: 1004px;
  padding-left: 7px;
}

.view {
  display: flex;
  align-items: center;
  justify-content: center;
  width: 36px;
  height: 20px;
}

.view.on {
  background: #0d5c31;
}

.pcent {
  margin-left: 13px;
}

/* Taskbar */
.taskbar {
  display: flex;
  justify-content: space-between;
  width: 1275px;
  height: 38px;
  background: linear-gradient(90deg, #ececec 0, #e6e9ec 14%, #dfe8ef 30%, #deebf4 60%, #e9ecef 74%, #f0efee 100%);
  border-right: 1px solid #dccbb5;
  color: #222;
}

.apps {
  display: grid;
  grid-template-columns: 45px 45px 44px 48px 46px 46px 46px 46px 46px 46px 42px;
}

.apps span {
  display: flex;
  align-items: center;
  justify-content: center;
}

.apps .run {
  margin: 0 5px 0 4px;
  border-bottom: 2px solid #2f6d92;
}

.apps .now {
  margin: 0;
  background: #f7fafc;
}

.tray {
  display: grid;
  grid-template-columns: 28px 86px 20px 27px 18px 28px 15px 28px 20px 24px 31px 70px 38px;
  align-items: center;
  justify-items: center;
  padding-right: 5px;
}

.weather {
  justify-self: start;
  padding-left: 4px;
  font-size: 12.5px;
}

.notes {
  margin-left: 2px;
}

.two {
  font-size: 11px;
  line-height: 15.5px;
  text-align: center;
  letter-spacing: -0.35px;
}
</style>
